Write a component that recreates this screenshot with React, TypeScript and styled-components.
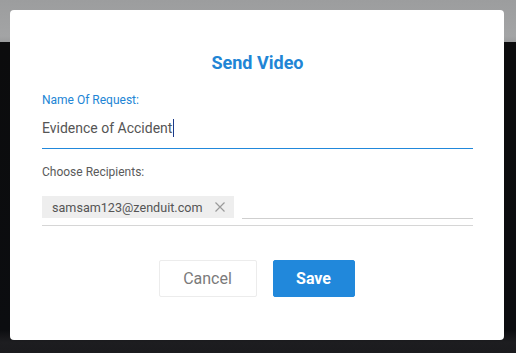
import React from "react";
import styled, { createGlobalStyle } from "styled-components";

const GlobalStyle = createGlobalStyle`
  html, body {
    margin: 0;
    padding: 0;
    width: 516px;
    height: 353px;
    overflow: hidden;
    font-family: Roboto, "Liberation Sans", sans-serif;
  }
`;

const Backdrop = styled.div`
  width: 516px;
  height: 353px;
  box-sizing: border-box;
  padding: 10px 12px 0 10px;
  background: linear-gradient(
      to bottom,
      #9c9d9e 0px,
      #a3a4a5 36px,
      #9a9b9c 42px,
      #0c0c0d 42px,
      #0c0d10 330px,
      #1d1d20 342px,
      #1b1b1e 353px
    );
`;

const Modal = styled.div`
  width: 494px;
  height: 330px;
  box-sizing: border-box;
  background: #fff;
  border-radius: 4px;
  padding: 43px 31px 0 32px;
  display: flex;
  flex-direction: column;
`;

const Title = styled.h2`
  margin: 0;
  text-align: center;
  color: #2185d5;
  font-size: 18px;
  font-weight: 700;
  line-height: 20px;
`;

const Field = styled.div<{ $top: number }>`
  margin-top: ${(p) => p.$top}px;
  display: flex;
  flex-direction: column;
`;

const Label = styled.label<{ $active?: boolean }>`
  font-size: 12px;
  line-height: 14px;
  color: ${(p) => (p.$active ? "#2185d5" : "#5a5a5a")};
`;

const TextInput = styled.div`
  margin-top: 12px;
  padding-bottom: 11px;
  border-bottom: 1px solid #2188db;
  font-size: 14px;
  line-height: 18px;
  color: #555;
  display: flex;
  align-items: center;
`;

const Caret = styled.span`
  display: inline-block;
  width: 1px;
  height: 18px;
  background: #1a3a8a;
  margin-left: 1px;
`;

const ChipRow = styled.div`
  margin-top: 17px;
  padding-bottom: 6px;
  border-bottom: 1px solid #d6d6d6;
  display: flex;
  align-items: flex-start;
  gap: 8px;
`;

const Chip = styled.div`
  height: 22px;
  box-sizing: border-box;
  padding: 0 9px 0 10px;
  background: #eeeeee;
  display: flex;
  align-items: center;
  gap: 13px;
  font-size: 12.6px;
  color: #555;
`;

const ChipClose = styled.svg`
  width: 10px;
  height: 10px;
  stroke: #9a9a9a;
  stroke-width: 1.2;
`;

const ChipInput = styled.div`
  flex: 1;
  height: 22px;
  border-bottom: 1px solid #cfcfcf;
`;

const Actions = styled.div`
  margin-top: 34px;
  padding-right: 2px;
  display: flex;
  justify-content: center;
  gap: 16px;
`;

const Button = styled.button<{ $primary?: boolean }>`
  height: 37px;
  box-sizing: border-box;
  font-family: Roboto, "Liberation Sans", sans-serif;
  font-size: 16px;
  border-radius: 2px;
  cursor: pointer;
  width: ${(p) => (p.$primary ? 82 : 98)}px;
  border: 1px solid ${(p) => (p.$primary ? "#2188db" : "#ececec")};
  background: ${(p) => (p.$primary ? "#2188db" : "#fff")};
  color: ${(p) => (p.$primary ? "#fff" : "#7a7a7a")};
  font-weight: ${(p) => (p.$primary ? 700 : 400)};
`;

export default function App() {
  return (
    <>
      <GlobalStyle />
      <Backdrop>
        <Modal>
          <Title>Send Video</Title>
          <Field $top={20}>
            <Label $active>Name Of Request:</Label>
            <TextInput>
              Evidence of Accident
              <Caret />
            </TextInput>
          </Field>
          <Field $top={16}>
            <Label>Choose Recipients:</Label>
            <ChipRow>
              <Chip>
                samsam123@zenduit.com
                <ChipClose viewBox="0 0 10 10">
                  <path d="M0.5 0.5 L9.5 9.5 M9.5 0.5 L0.5 9.5" fill="none" />
                </ChipClose>
              </Chip>
              <ChipInput />
            </ChipRow>
          </Field>
          <Actions>
            <Button>Cancel</Button>
            <Button $primary>Save</Button>
          </Actions>
        </Modal>
      </Backdrop>
    </>
  );
}
